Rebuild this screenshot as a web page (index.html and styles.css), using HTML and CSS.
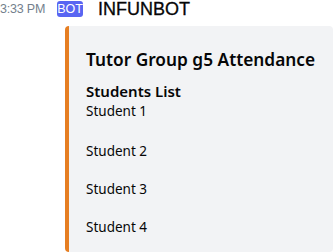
FILE: index.html
```html
<!DOCTYPE html>
<html>
<head>
<meta charset="utf-8">
<link rel="stylesheet" href="styles.css">
</head>
<body>
<div class="msg">
  <div class="header">
    <span class="time">3:33 PM</span>
    <span class="badge">BOT</span>
    <span class="name">INFUNBOT</span>
  </div>
  <div class="embed">
    <div class="title">Tutor Group g5 Attendance</div>
    <div class="field first">
      <div class="fname">Students List</div>
      <div class="fvalue">Student 1</div>
    </div>
    <div class="field">
      <div class="fvalue">Student 2</div>
    </div>
    <div class="field">
      <div class="fvalue">Student 3</div>
    </div>
    <div class="field">
      <div class="fvalue">Student 4</div>
    </div>
  </div>
</div>
</body>
</html>
```
FILE: styles.css
```css
html, body {
  margin: 0;
  padding: 0;
  background: #ffffff;
  overflow: hidden;
}
.msg {
  display: flex;
  flex-direction: column;
}
.header {
  display: flex;
  align-items: center;
  height: 18px;
}
.time {
  font-family: "Liberation Sans", Arial, sans-serif;
  font-size: 12.5px;
  color: #747f8d;
  width: 57px;
  letter-spacing: -0.2px;
}
.badge {
  font-family: "Liberation Sans", Arial, sans-serif;
  background: #5865f2;
  color: #ffffff;
  font-size: 12.5px;
  height: 16px;
  line-height: 16px;
  width: 26px;
  border-radius: 3px;
  text-align: center;
}
.name {
  font-family: "Liberation Sans", Arial, sans-serif;
  font-size: 18px;
  color: #060607;
  margin-left: 15px;
  -webkit-text-stroke: 0.3px #060607;
}
.embed {
  margin-top: 8px;
  margin-left: 65px;
  width: 268px;
  height: 226px;
  box-sizing: border-box;
  background: #f2f3f5;
  border-left: 4px solid #e67e22;
  border-radius: 4px;
  padding: 23px 16px 0 17px;
  font-family: "Noto Sans", "Open Sans", sans-serif;
  color: #060607;
}
.title {
  font-size: 17.3px;
  font-weight: 600;
  line-height: 22px;
}
.field {
  margin-top: 20px;
}
.field.first {
  margin-top: 10px;
  padding-bottom: 2px;
}
.fname {
  font-size: 15px;
  font-weight: 600;
  line-height: 21px;
}
.fvalue {
  font-size: 13.5px;
  line-height: 18px;
}
```
